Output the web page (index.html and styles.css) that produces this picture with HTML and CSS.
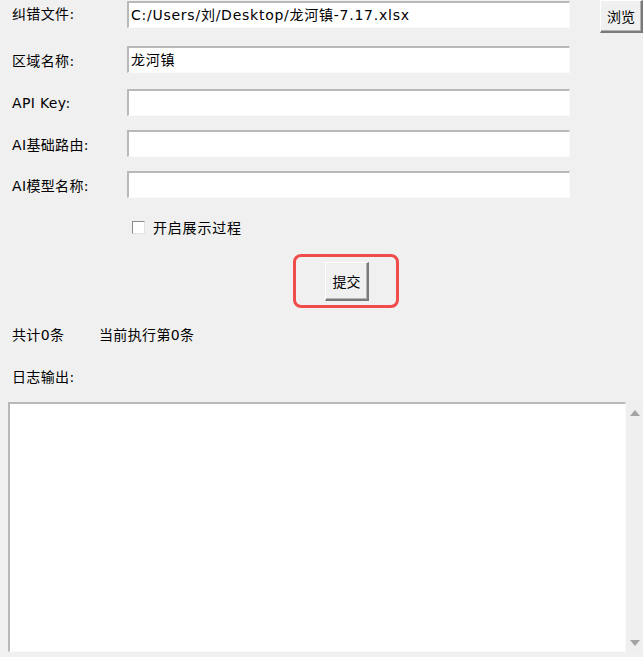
FILE: index.html
```html
<!DOCTYPE html>
<html lang="zh-CN">
<head>
<meta charset="utf-8">
<title>纠错工具</title>
<link rel="stylesheet" href="styles.css">
</head>
<body>
<div class="app">
  <div class="row row-1">
    <span class="label">纠错文件:</span>
    <div class="entry">C:/Users/刘/Desktop/龙河镇-7.17.xlsx</div>
    <button class="btn browse">浏览</button>
  </div>
  <div class="row row-2">
    <span class="label">区域名称:</span>
    <div class="entry">龙河镇</div>
  </div>
  <div class="row row-3">
    <span class="label">API Key:</span>
    <div class="entry"></div>
  </div>
  <div class="row row-4">
    <span class="label">AI基础路由:</span>
    <div class="entry"></div>
  </div>
  <div class="row row-5">
    <span class="label">AI模型名称:</span>
    <div class="entry"></div>
  </div>
  <div class="check-row">
    <span class="checkbox"></span>
    <span class="check-text">开启展示过程</span>
  </div>
  <div class="submit-row">
    <div class="highlight">
      <button class="btn submit">提交</button>
    </div>
  </div>
  <div class="status-row">
    <span class="status-total">共计0条</span>
    <span class="status-current">当前执行第0条</span>
  </div>
  <div class="log-label">日志输出:</div>
  <div class="log-area">
    <div class="log-box"></div>
    <div class="scrollbar">
      <span class="arrow up"></span>
      <span class="arrow down"></span>
    </div>
  </div>
</div>
</body>
</html>
```
FILE: styles.css
```css
html, body {
  margin: 0;
  padding: 0;
  background: #f0f0f0;
}
body {
  width: 643px;
  height: 657px;
  overflow: hidden;
  font-family: "DejaVu Sans", "Noto Sans CJK SC", sans-serif;
  font-size: 14px;
  letter-spacing: 0.35px;
  color: #000;
}
.app {
  display: flex;
  flex-direction: column;
}
.row {
  display: flex;
  align-items: center;
  height: 27px;
}
.row-1 { margin-top: 1px; align-items: flex-start; }
.row-1 .label { line-height: 27px; }
.row-2 { margin-top: 18px; }
.row-3 { margin-top: 16px; }
.row-4 { margin-top: 14px; }
.row-5 { margin-top: 14px; }
.label {
  width: 115px;
  padding-left: 12px;
  flex: none;
  white-space: nowrap;
}
.entry {
  box-sizing: border-box;
  width: 443px;
  height: 27px;
  background: #fff;
  border-top: 2px solid #b9b9b9;
  border-left: 2px solid #b9b9b9;
  border-right: 1px solid #fafafa;
  border-bottom: 1px solid #fafafa;
  font-size: 14px;
  letter-spacing: 0.75px;
  line-height: 24px;
  padding-left: 2px;
  white-space: nowrap;
  overflow: hidden;
}
.btn {
  box-sizing: border-box;
  background: #f0f0f0;
  border-top: 1px solid #ffffff;
  border-left: 1px solid #ffffff;
  border-right: 2px solid #7a7a7a;
  border-bottom: 2px solid #7a7a7a;
  box-shadow: inset -1px -1px 0 #b4b4b4;
  font-family: "Noto Sans CJK SC", sans-serif;
  font-size: 14px;
  color: #000;
  padding: 0;
  margin: 0;
}
.browse {
  width: 43px;
  height: 33px;
  margin-left: 30px;
  margin-top: -1px;
}
.check-row {
  display: flex;
  align-items: center;
  margin-top: 21px;
  height: 16px;
  padding-left: 132px;
}
.checkbox {
  box-sizing: border-box;
  width: 13px;
  height: 13px;
  background: #fff;
  border-top: 1px solid #8a8a8a;
  border-left: 1px solid #8a8a8a;
  border-right: 1px solid #e2e2e2;
  border-bottom: 1px solid #e2e2e2;
}
.check-text {
  margin-left: 8px;
  letter-spacing: 0.8px;
}
.submit-row {
  display: flex;
  margin-top: 19px;
  padding-left: 293px;
}
.highlight {
  box-sizing: border-box;
  width: 106px;
  height: 54px;
  border: 3px solid #f04c4c;
  border-radius: 8px;
  display: flex;
  align-items: center;
  justify-content: center;
  padding-left: 2px;
}
.submit {
  width: 44px;
  height: 39px;
}
.status-row {
  display: flex;
  height: 18px;
  align-items: center;
  margin-top: 17px;
  padding-left: 12px;
}
.status-total {
  width: 87px;
  flex: none;
}
.log-label {
  padding-left: 12px;
  height: 18px;
  line-height: 18px;
  margin-top: 25px;
}
.log-area {
  display: flex;
  margin-top: 16px;
  padding-left: 8px;
  height: 250px;
}
.log-box {
  box-sizing: border-box;
  width: 618px;
  height: 250px;
  background: #fff;
  border-top: 2px solid #b9b9b9;
  border-left: 2px solid #b9b9b9;
  border-right: 1px solid #fafafa;
  border-bottom: 1px solid #fafafa;
}
.scrollbar {
  width: 17px;
  height: 250px;
  background: #efefef;
  display: flex;
  flex-direction: column;
  justify-content: space-between;
  align-items: center;
  padding: 8px 0 6px;
  box-sizing: border-box;
}
.arrow {
  width: 0;
  height: 0;
  border-left: 5px solid transparent;
  border-right: 5px solid transparent;
}
.arrow.up { border-bottom: 6px solid #a3a3a3; }
.arrow.down { border-top: 6px solid #a3a3a3; }
```
